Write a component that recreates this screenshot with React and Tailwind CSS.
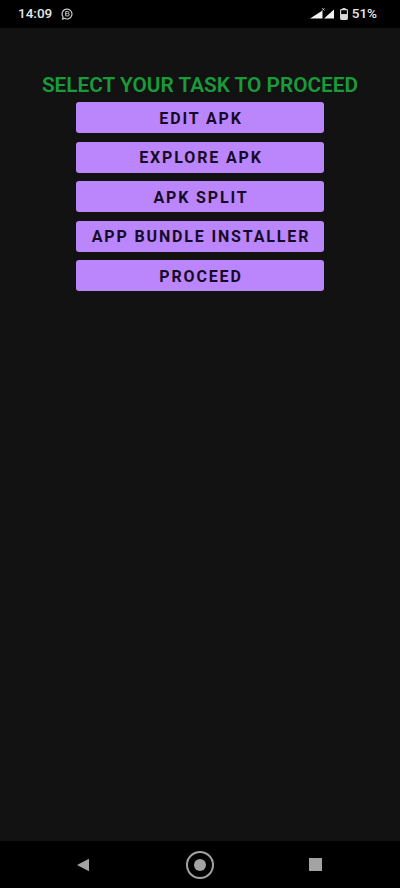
import React from "react";

const tasks = ["EDIT APK", "EXPLORE APK", "APK SPLIT", "APP BUNDLE INSTALLER", "PROCEED"];

const StatusBar = () => (
    <div className="h-[28px] bg-black flex items-center justify-between pl-[18px] pr-[23px] text-[#e6e6e6]">
        <div className="flex items-center gap-[9px]">
            <span className="text-[13.5px] font-medium leading-none">14:09</span>
            <svg width="12" height="12" viewBox="0 0 12 12" fill="none">
                <path d="M6 1a5 5 0 1 1-2.6 9.3L1.6 11l.5-2A5 5 0 0 1 6 1z" stroke="#d8d8d8" strokeWidth="1.1" />
                <path d="M4.7 3.5h2a1 1 0 0 1 .5 2 1.2 1.2 0 0 1-.4 2.4H4.7zM4.7 5.6h2" stroke="#d8d8d8" strokeWidth="0.9" />
            </svg>
        </div>
        <div className="flex items-center">
            <svg width="25" height="12" viewBox="0 0 25 12" fill="#f2f2f2">
                <path d="M0 10.5 12.5 2.5v8z" />
                <path d="M14 10.5 24 1.5v9z" />
                <path d="M12.2 .3l2.2 2.2M14.4 .3 12.2 2.5" stroke="#f2f2f2" strokeWidth="0.8" />
            </svg>
            <svg className="ml-[5px]" width="8" height="12" viewBox="0 0 8 12" fill="none">
                <path d="M2.5 0h3v1.5h-3z" fill="#d8d8d8" />
                <rect x="0.6" y="1.6" width="6.8" height="9.8" rx="0.8" stroke="#d8d8d8" strokeWidth="1.1" />
                <rect x="1" y="6" width="6" height="5.5" fill="#d8d8d8" />
            </svg>
            <span className="ml-[4px] text-[13.5px] font-medium leading-none">51%</span>
        </div>
    </div>
);

const NavBar = () => (
    <div className="h-[47px] bg-black flex items-center justify-between pl-[76px] pr-[78px]">
        <svg width="14" height="14" viewBox="0 0 14 14" fill="#a3a3a3">
            <path d="M1 7 13 .8v12.4z" />
        </svg>
        <div className="w-[28px] h-[28px] rounded-full border-2 border-[#a3a3a3] flex items-center justify-center">
            <div className="w-[12px] h-[12px] rounded-full bg-[#a3a3a3]" />
        </div>
        <div className="w-[13px] h-[13px] bg-[#a3a3a3]" />
    </div>
);

export default function App() {
    return (
        <div className="w-[400px] h-[888px] flex flex-col bg-[#121212] font-['Roboto',sans-serif]">
            <StatusBar />
            <div className="flex-1 flex flex-col items-center pt-[45px]">
                <h1 className="text-[20.8px] leading-[24px] font-semibold text-[#1a9a3a] whitespace-nowrap">
                    SELECT YOUR TASK TO PROCEED
                </h1>
                <div className="mt-[5px] flex flex-col gap-[8.5px]">
                    {tasks.map((task) => (
                        <button
                            key={task}
                            className="w-[248px] h-[31px] pt-[2px] pl-[2px] bg-[#bb86fc] rounded-[3px] text-[#160b26] text-[16px] font-bold tracking-[1.85px] flex items-center justify-center whitespace-nowrap"
                        >
                            {task}
                        </button>
                    ))}
                </div>
            </div>
            <NavBar />
        </div>
    );
}
